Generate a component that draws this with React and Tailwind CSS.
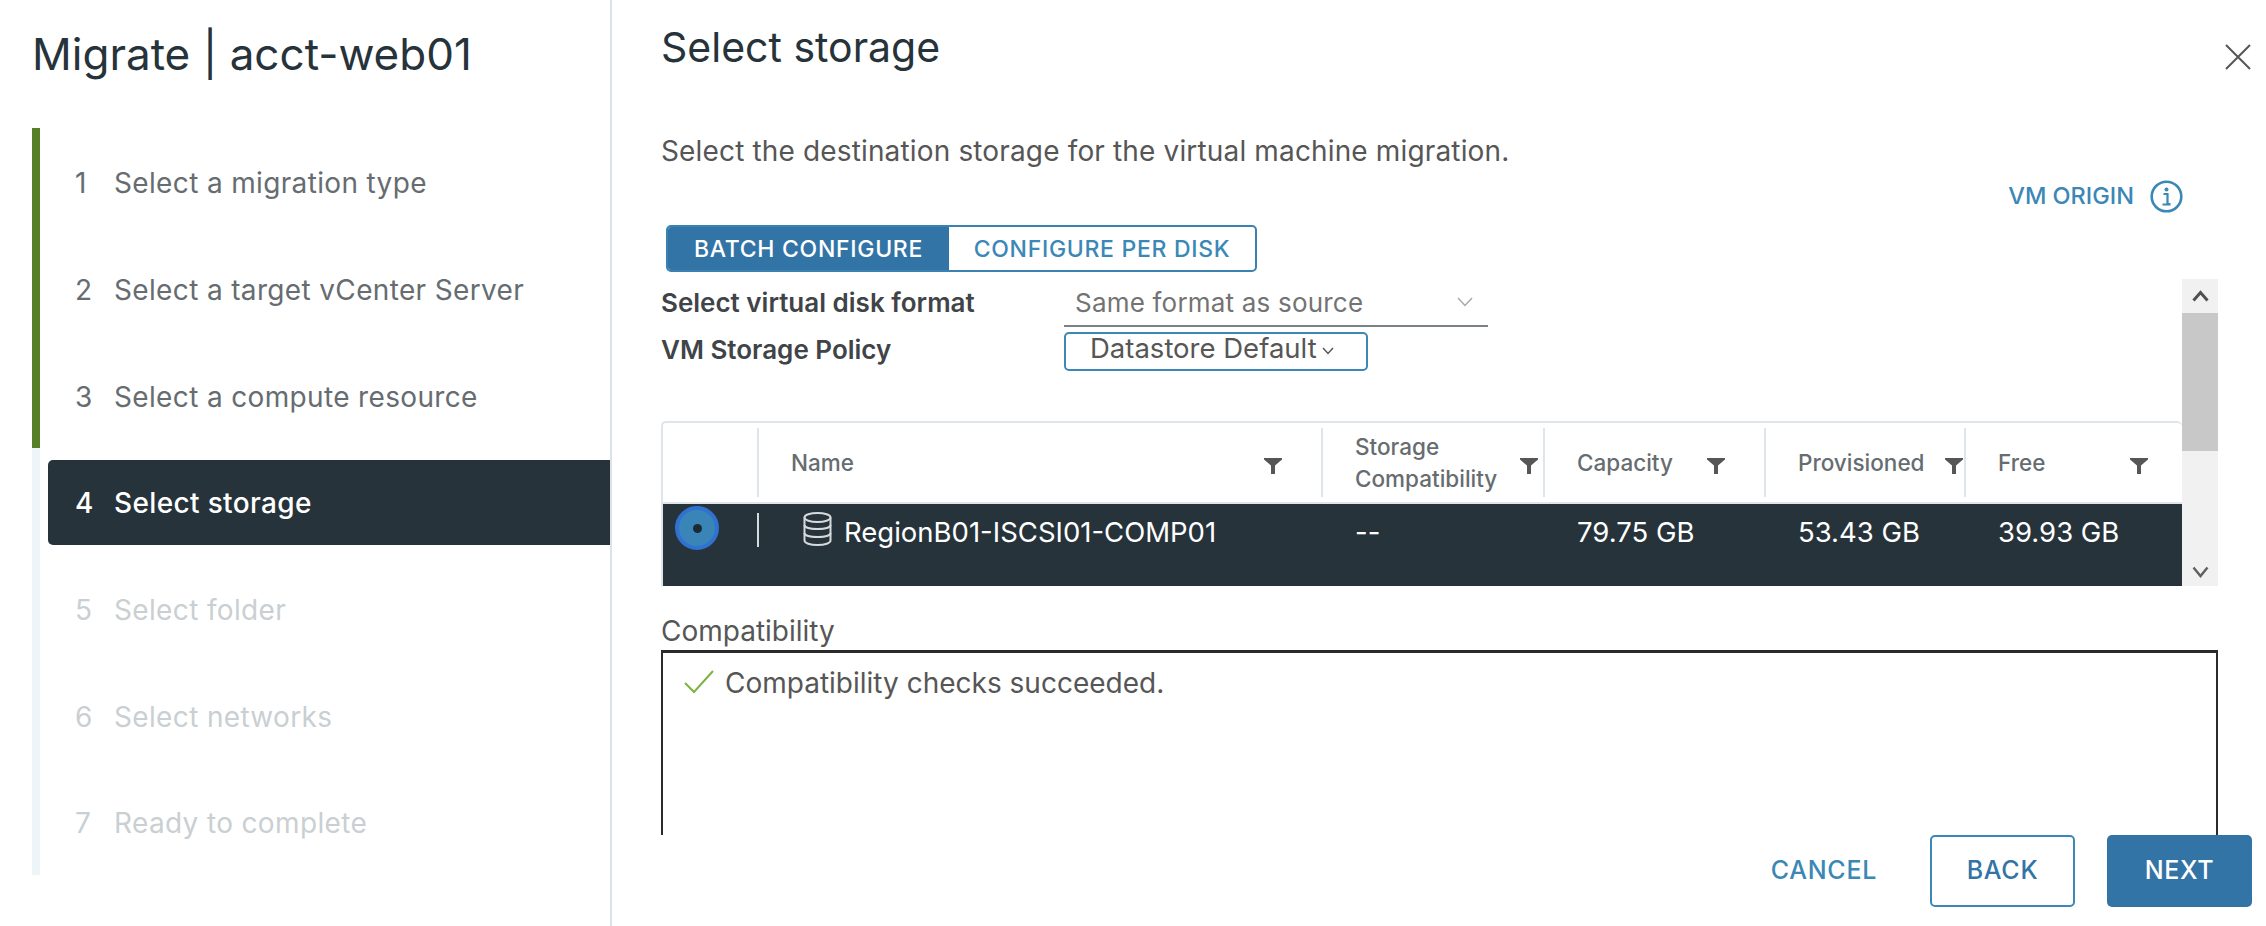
const steps = [
  { n: 1, label: 'Select a migration type', state: 'done' },
  { n: 2, label: 'Select a target vCenter Server', state: 'done' },
  { n: 3, label: 'Select a compute resource', state: 'done' },
  { n: 4, label: 'Select storage', state: 'active' },
  { n: 5, label: 'Select folder', state: 'todo' },
  { n: 6, label: 'Select networks', state: 'todo' },
  { n: 7, label: 'Ready to complete', state: 'todo' },
];

const columns = [
  { label: 'Name', pr: 'pr-[39px]' },
  { label: 'Storage Compatibility', pr: 'pr-[5px]', wrap: true },
  { label: 'Capacity', pr: 'pr-[39px]' },
  { label: 'Provisioned', pr: 'pr-[1px]' },
  { label: 'Free', pr: 'pr-[34px]' },
];

const FilterIcon = () => (
  <svg width="18" height="16" viewBox="0 0 18 16" className="mt-[6px] shrink-0 text-[#565656]">
    <path d="M0 0H18V1.5L11 7.5V16H7V7.5L0 1.5Z" fill="currentColor" />
  </svg>
);

const InfoIcon = () => (
  <svg width="33" height="33" viewBox="0 0 33 33" fill="none" className="text-[#3b87b5]">
    <circle cx="16.5" cy="16.5" r="14.8" stroke="currentColor" strokeWidth="2.6" />
    <circle cx="16.5" cy="9.5" r="2" fill="currentColor" />
    <path d="M13.5 14H17.5V24H20.5M12.5 24.5H20.5" stroke="currentColor" strokeWidth="2.2" />
  </svg>
);

const DatastoreIcon = () => (
  <svg width="29" height="34" viewBox="0 0 29 34" fill="none" stroke="#d5dadd" strokeWidth="2">
    <ellipse cx="14.5" cy="5.5" rx="13" ry="4.5" />
    <path d="M1.5 5.5V28.5C1.5 31 7 33 14.5 33S27.5 31 27.5 28.5V5.5" />
    <path d="M1.5 13C1.5 15.5 7 17 14.5 17S27.5 15.5 27.5 13" />
    <path d="M1.5 21C1.5 23.5 7 25 14.5 25S27.5 23.5 27.5 21" />
  </svg>
);

const App = () => {
  return (
    <div className="flex h-[926px] w-[2266px] overflow-hidden bg-white font-['Inter','Liberation_Sans',sans-serif] text-[#565656]">
      {/* Wizard steps */}
      <div className="w-[612px] shrink-0 border-r-2 border-[#dbe3e8]">
        <h1 className="h-[128px] pl-[32px] pt-[28px] text-[44px] leading-[52px] font-normal text-[#27333b]">
          Migrate | acct-web01
        </h1>
        <div className="ml-[32px]">
          {steps.map((step) => (
            <div
              key={step.n}
              className={`flex h-[106.7px] items-center border-l-[8px] ${step.state === 'done' ? 'border-[#558028]' : 'border-[#eef5f9]'}`}
            >
              {step.state === 'active' ? (
                <div className="ml-[8px] mt-[2px] flex h-[85px] w-full items-center rounded-l-[5px] bg-[#27333b] pl-[27px] pt-[2px] text-[28px] font-medium tracking-[0.35px] text-white">
                  <span className="w-[39px]">{step.n}</span>
                  <span>{step.label}</span>
                </div>
              ) : (
                <div className={`flex items-center pl-[35px] pt-[4px] text-[28px] tracking-[0.35px] ${step.state === 'todo' ? 'text-[#c9cfd2]' : 'text-[#666c70]'}`}>
                  <span className="w-[39px]">{step.n}</span>
                  <span>{step.label}</span>
                </div>
              )}
            </div>
          ))}
        </div>
      </div>

      {/* Main panel */}
      <div className="flex min-w-0 flex-1 flex-col">
        <div className="h-[835px] overflow-hidden pl-[49px]">
          <div className="flex h-[96px] items-center justify-between pr-[15px]">
            <h2 className="text-[41px] font-normal text-[#27333b]">Select storage</h2>
            <button className="mt-[18px] text-[#565656]">
              <svg width="26" height="26" viewBox="0 0 26 26" fill="none" stroke="currentColor" strokeWidth="2">
                <path d="M1 1L25 25M25 1L1 25" />
              </svg>
            </button>
          </div>

          <div className="flex h-[176px] justify-between pr-[83px]">
            <div>
              <p className="h-[110px] text-[28px] leading-[110px] tracking-[0.15px] text-[#565656]">
                Select the destination storage for the virtual machine migration.
              </p>
              <div className="ml-[5px] mt-[19px] flex h-[47px] w-[591px] overflow-hidden rounded-[5px] border-2 border-[#3b82b0] text-[23px] font-medium tracking-[0.7px]">
                <div className="flex w-[281px] items-center justify-center bg-[#3274a6] pt-[1px] text-white">BATCH CONFIGURE</div>
                <div className="flex flex-1 items-center justify-center pt-[1px] text-[#3b87b5]">CONFIGURE PER DISK</div>
              </div>
            </div>
            <div className="mt-[84px] flex h-[33px] items-center gap-[16px] text-[23.5px] font-medium text-[#3b87b5]">
              <span className="pb-[2px]">VM ORIGIN</span>
              <InfoIcon />
            </div>
          </div>

          {/* Form and table, with their scrollbar */}
          <div className="mt-[7px] flex h-[307px] w-[1557px]">
            <div className="w-[1521px]">
              <div className="flex h-[48px] items-center">
                <span className="w-[403px] pb-[2px] text-[26px] font-semibold text-[#3f4448]">Select virtual disk format</span>
                <div className="flex h-[48px] w-[424px] items-center justify-between border-b-2 border-[#7b8287] pl-[11px] pr-[15px]">
                  <span className="text-[26px] tracking-[0.2px] text-[#737373]">Same format as source</span>
                  <svg width="16" height="10" viewBox="0 0 16 10" fill="none" stroke="#a9a9a9" strokeWidth="1.5">
                    <path d="M1 1L8 8.5L15 1" />
                  </svg>
                </div>
              </div>
              <div className="mt-[5px] flex h-[39px] items-center">
                <span className="w-[403px] pb-[5px] text-[26px] font-semibold text-[#3f4448]">VM Storage Policy</span>
                <div className="flex h-[39px] w-[304px] items-center gap-[5px] rounded-[5px] border-2 border-[#3b87b5] pb-[5px] pl-[24px] text-[27.5px] text-[#565656]">
                  <span>Datastore Default</span>
                  <svg width="12" height="8" viewBox="0 0 12 8" fill="none" stroke="#565656" strokeWidth="1.5" className="mt-[3px]">
                    <path d="M1 1L6 6.5L11 1" />
                  </svg>
                </div>
              </div>

              <div className="mt-[50px] h-[165px] overflow-hidden rounded-t-[5px] border-l-2 border-t-2 border-[#dfe5e8]">
                <div className="grid h-[81px] grid-cols-[94px_564px_222px_221px_200px_1fr] border-b-2 border-[#dfe5e8] pt-[5px] text-[22.5px] font-medium text-[#666c70]">
                  <div className="h-[69px]" />
                  {columns.map((col) => (
                    <div
                      key={col.label}
                      className={`flex h-[69px] items-center justify-between border-l-2 border-[#dfe5e8] pl-[32px] ${col.pr}`}
                    >
                      <span className={col.wrap ? 'w-[160px] leading-[32px]' : ''}>{col.label}</span>
                      <FilterIcon />
                    </div>
                  ))}
                </div>
                <div className="grid h-[82px] grid-cols-[94px_564px_222px_221px_200px_1fr] bg-[#27333b] text-[27.5px] font-normal text-white">
                  <div className="pl-[12px] pt-[2px]">
                    <div className="flex h-[44px] w-[44px] items-center justify-center rounded-full border-4 border-[#2f72d0] bg-[#3a85b8]">
                      <div className="h-[9px] w-[9px] rounded-full bg-[#1d2a33]" />
                    </div>
                  </div>
                  <div className="relative flex items-start pl-[46px] pt-[8px]">
                    <span className="absolute left-0 top-[9px] h-[34px] w-[2px] bg-[#d5dadd]" />
                    <DatastoreIcon />
                    <span className="ml-[12px]">RegionB01-ISCSI01-COMP01</span>
                  </div>
                  <div className="pl-[34px] pt-[8px]">--</div>
                  <div className="pl-[34px] pt-[8px]">79.75 GB</div>
                  <div className="pl-[34px] pt-[8px]">53.43 GB</div>
                  <div className="pl-[34px] pt-[8px]">39.93 GB</div>
                </div>
              </div>
            </div>

            <div className="flex w-[36px] flex-col bg-[#f1f1f1]">
              <div className="flex h-[34px] items-center justify-center">
                <svg width="17" height="12" viewBox="0 0 17 12" fill="none" stroke="#505050" strokeWidth="3">
                  <path d="M1.5 10.5L8.5 2.5L15.5 10.5" />
                </svg>
              </div>
              <div className="h-[138px] bg-[#c8c8c8]" />
              <div className="flex flex-1 items-end justify-center pb-[8px]">
                <svg width="17" height="12" viewBox="0 0 17 12" fill="none" stroke="#606060" strokeWidth="2.4">
                  <path d="M1.5 1.5L8.5 10L15.5 1.5" />
                </svg>
              </div>
            </div>
          </div>

          <div className="mt-[26px] h-[38px] text-[28px] leading-[38px] text-[#565656]">Compatibility</div>
          <div className="flex h-[300px] w-[1557px] items-start gap-[11px] border-2 border-t-[3px] border-[#2b2b2b] pl-[21px] pt-[9px]">
            <svg width="30" height="24" viewBox="0 0 30 24" fill="none" stroke="#7cb342" strokeWidth="2" className="mt-[8px] shrink-0">
              <path d="M1 13L10 22L29 1" />
            </svg>
            <span className="text-[28px] text-[#565656]">Compatibility checks succeeded.</span>
          </div>
        </div>

        {/* Footer buttons */}
        <div className="flex h-[91px] items-start justify-end pr-[14px] text-[25px] font-medium tracking-[0.7px]">
          <button className="mr-[53px] h-[72px] text-[#3b87b5]">CANCEL</button>
          <button className="h-[72px] w-[145px] rounded-[5px] border-2 border-[#3b87b5] text-[#3274a6]">BACK</button>
          <button className="ml-[32px] h-[72px] w-[145px] rounded-[5px] bg-[#3274a6] text-white">NEXT</button>
        </div>
      </div>
    </div>
  );
};

export default App;
